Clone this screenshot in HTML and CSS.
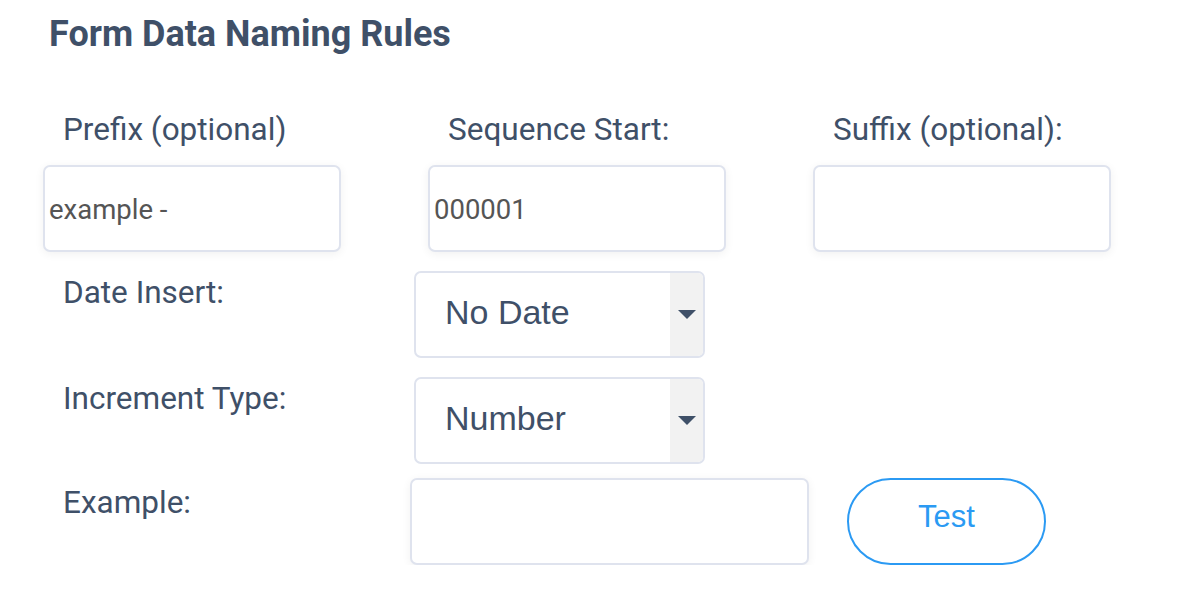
FILE: index.html
```html
<!DOCTYPE html>
<html>
<head>
<meta charset="utf-8">
<link rel="stylesheet" href="styles.css">
</head>
<body>
<div class="page">
  <h1 class="title">Form Data Naming Rules</h1>
  <div class="top-grid">
    <div class="field">
      <label class="lbl">Prefix (optional)</label>
      <div class="box"><span class="val">example -</span></div>
    </div>
    <div class="field">
      <label class="lbl">Sequence Start:</label>
      <div class="box"><span class="val">000001</span></div>
    </div>
    <div class="field">
      <label class="lbl">Suffix (optional):</label>
      <div class="box"></div>
    </div>
  </div>
  <div class="row row-date">
    <label class="lbl row-lbl">Date Insert:</label>
    <div class="select"><span class="sel-text">No Date</span><span class="arrow"><span class="tri"></span></span></div>
  </div>
  <div class="row row-inc">
    <label class="lbl row-lbl">Increment Type:</label>
    <div class="select"><span class="sel-text">Number</span><span class="arrow"><span class="tri"></span></span></div>
  </div>
  <div class="row row-ex">
    <label class="lbl row-lbl ex-lbl">Example:</label>
    <div class="box ex-box"></div>
    <button class="test-btn">Test</button>
  </div>
</div>
</body>
</html>
```
FILE: styles.css
```css
html, body {
  margin: 0;
  padding: 0;
  background: #ffffff;
}
.page {
  padding: 12px 0 0 43px;
  font-family: Roboto, "Liberation Sans", sans-serif;
  color: #3f5068;
}
.title {
  margin: 0 0 0 6px;
  font-size: 36px;
  font-weight: 700;
  line-height: 44px;
  color: #3f5068;
}
.top-grid {
  display: grid;
  grid-template-columns: repeat(3, 298px);
  column-gap: 87px;
  margin-top: 55px;
}
.field {
  display: flex;
  flex-direction: column;
}
.lbl {
  font-size: 31.5px;
  line-height: 38px;
  padding-left: 20px;
  color: #3f5068;
}
.box {
  box-sizing: border-box;
  height: 87px;
  border: 2px solid #dfe3ee;
  border-radius: 7px;
  background: #fff;
  box-shadow: 0 2px 10px rgba(0, 0, 0, 0.06);
  display: flex;
  align-items: center;
  padding-left: 4px;
}
.field .box {
  margin-top: 16px;
}
.val {
  font-size: 27.5px;
  color: #555555;
  padding-top: 2px;
}
.row {
  display: flex;
  align-items: flex-start;
}
.row-lbl {
  width: 351px;
  flex: none;
  padding-top: 3px;
}
.row-date {
  margin-top: 19px;
}
.row-inc {
  margin-top: 19px;
}
.row-ex {
  margin-top: 14px;
}
.ex-lbl {
  width: 347px;
  padding-top: 6px;
}
.select {
  box-sizing: border-box;
  width: 291px;
  height: 87px;
  border: 2px solid #dfe3ee;
  border-radius: 7px;
  background: #fff;
  display: flex;
  overflow: hidden;
}
.sel-text {
  flex: 1;
  font-family: "Liberation Sans", Arial, sans-serif;
  font-size: 34px;
  color: #3f5068;
  padding-left: 29px;
  padding-bottom: 5px;
  display: flex;
  align-items: center;
}
.arrow {
  width: 33px;
  background: #f2f2f2;
  display: flex;
  align-items: center;
  justify-content: center;
}
.tri {
  width: 0;
  height: 0;
  border-left: 9px solid transparent;
  border-right: 9px solid transparent;
  border-top: 9px solid #3f5068;
}
.ex-box {
  width: 399px;
  height: 87px;
}
.test-btn {
  box-sizing: border-box;
  margin-left: 38px;
  width: 199px;
  height: 87px;
  border: 2px solid #2b9af3;
  border-radius: 44px;
  background: #fff;
  color: #2b9af3;
  font-family: "Liberation Sans", Arial, sans-serif;
  font-size: 31px;
  padding: 0 0 10px 0;
}
```
